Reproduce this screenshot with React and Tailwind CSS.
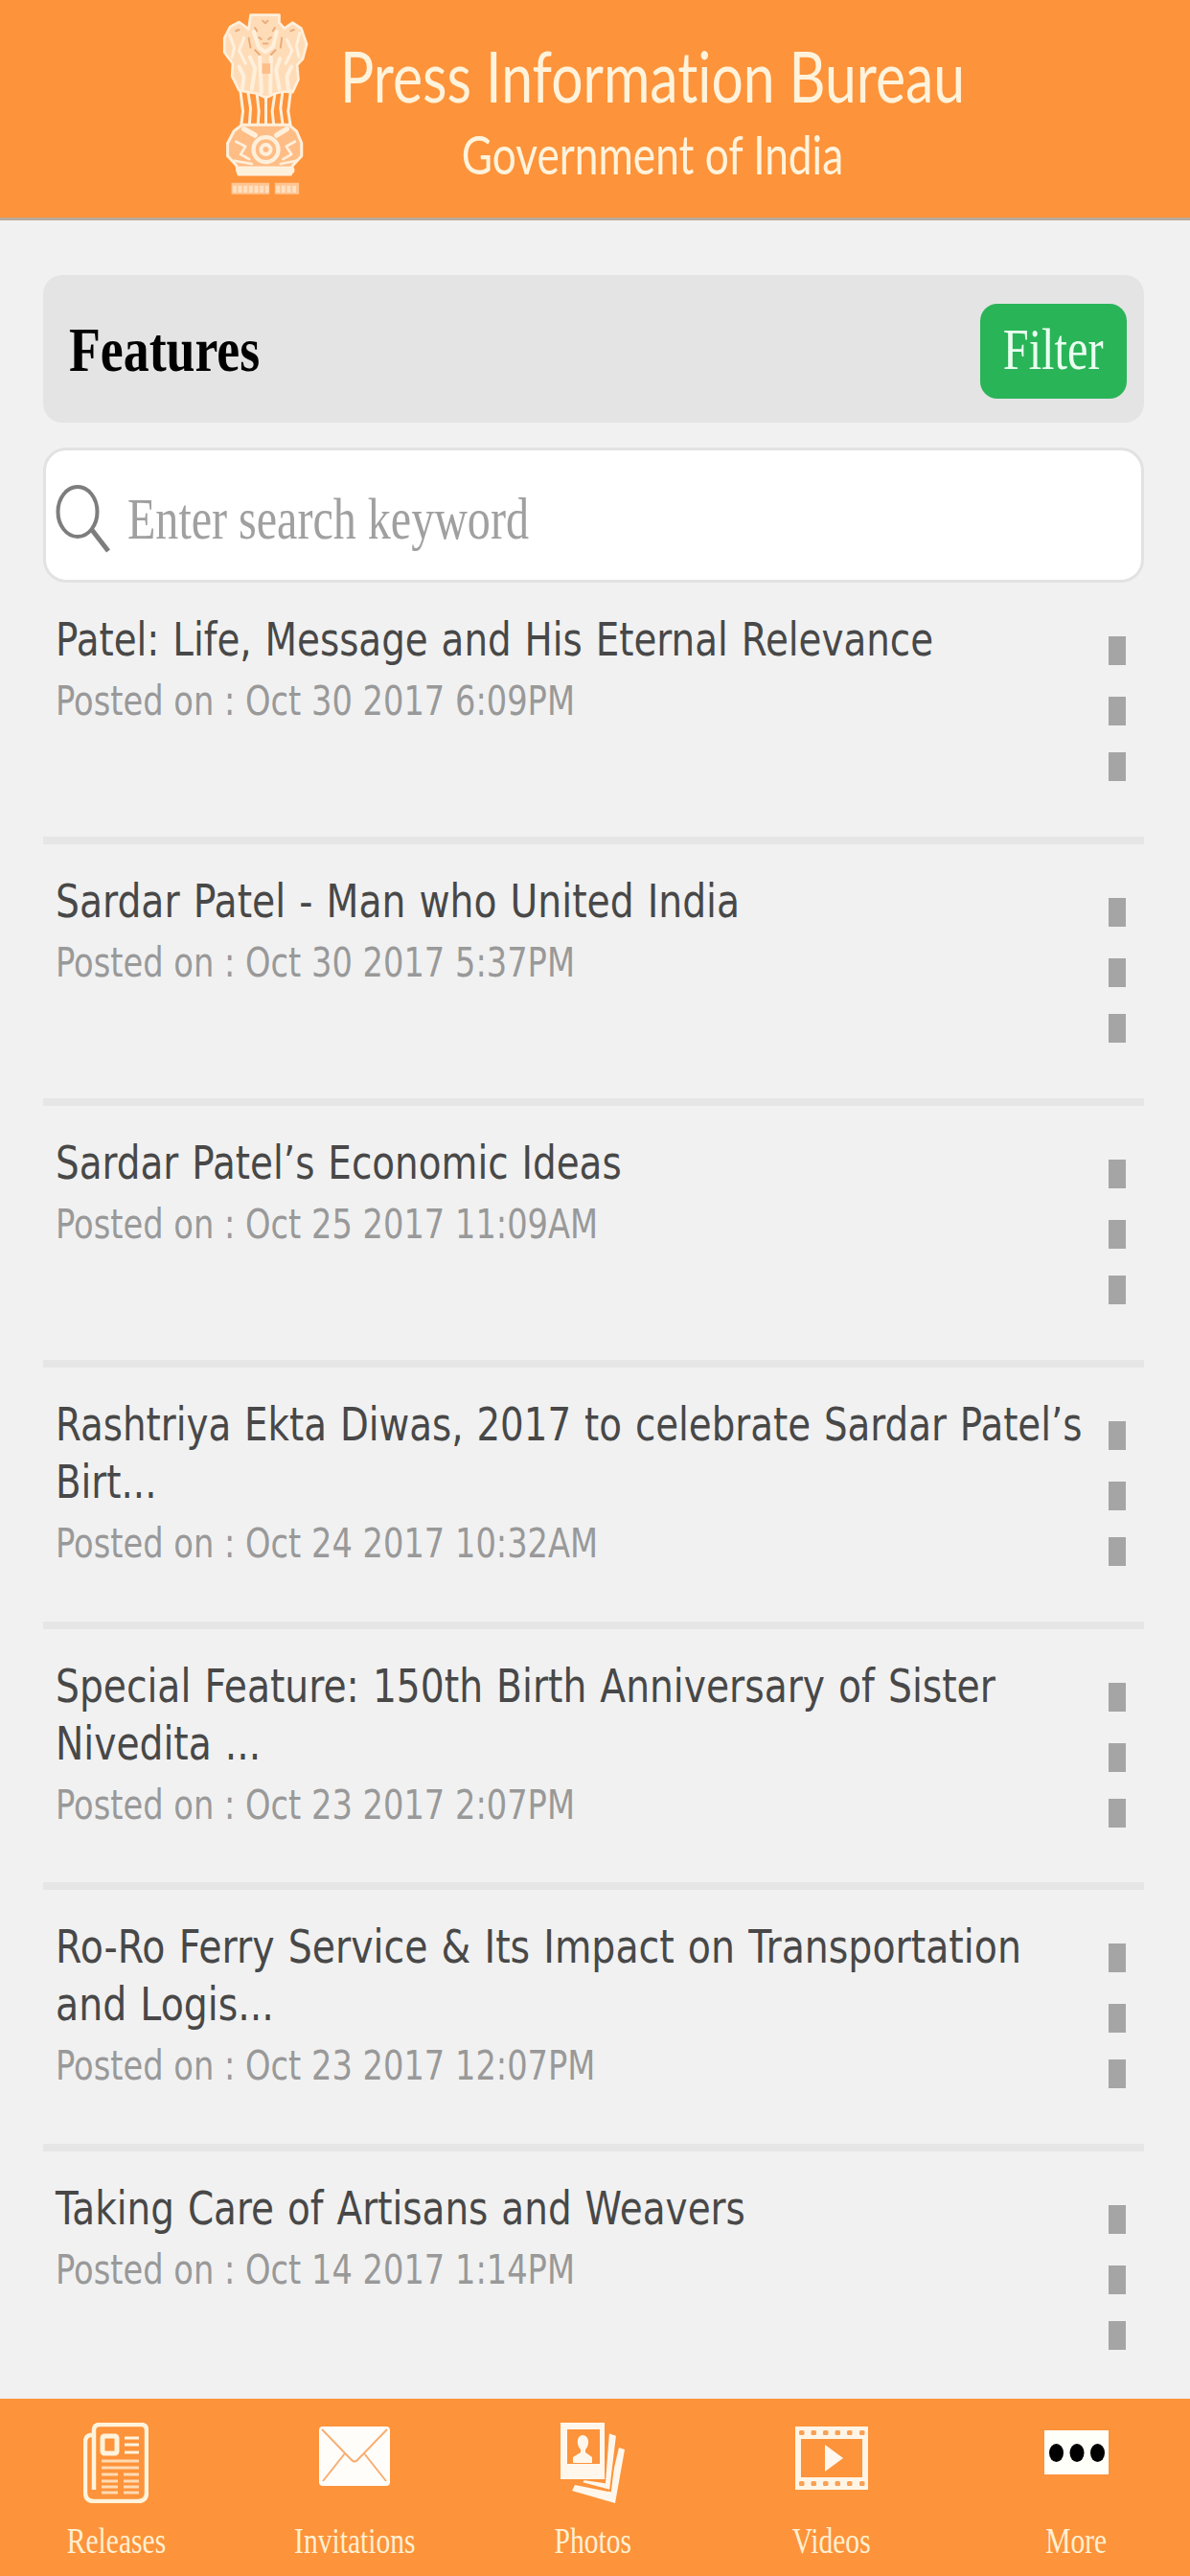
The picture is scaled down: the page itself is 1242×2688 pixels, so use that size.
const articles = [
  { title: 'Patel: Life, Message and His Eternal Relevance', date: 'Oct 30 2017 6:09PM', fit: 'scale-x-[0.8085]' },
  { title: 'Sardar Patel - Man who United India', date: 'Oct 30 2017 5:37PM', fit: 'scale-x-[0.818]' },
  { title: 'Sardar Patel’s Economic Ideas', date: 'Oct 25 2017 11:09AM', fit: 'scale-x-[0.81]' },
  { title: 'Rashtriya Ekta Diwas, 2017 to celebrate Sardar Patel’s\nBirt...', date: 'Oct 24 2017 10:32AM', fit: 'scale-x-[0.8075]' },
  { title: 'Special Feature: 150th Birth Anniversary of Sister\nNivedita ...', date: 'Oct 23 2017 2:07PM', fit: 'scale-x-[0.817]' },
  { title: 'Ro-Ro Ferry Service & Its Impact on Transportation\nand Logis...', date: 'Oct 23 2017 12:07PM', fit: 'scale-x-[0.8215]' },
  { title: 'Taking Care of Artisans and Weavers', date: 'Oct 14 2017 1:14PM', fit: 'scale-x-[0.811]' },
];

const Emblem = () => (
  <svg viewBox="95 40 275 580" className="h-[193px] w-[92px]" fill="none" stroke="#fff0dc" strokeWidth="8" strokeLinecap="round" strokeLinejoin="round">
    {/* lions */}
    <path d="M186 48H276V72L292 90L318 72L345 90L362 140L350 185L332 205L336 250L318 290L290 288L262 294L234 308L206 294L178 290L150 284L128 240L130 200L104 165V120L122 85L150 70L180 92Z" fill="#ffdcb8" />
    <path d="M196 100L212 150L232 164L256 148L268 100M150 210L165 240L160 280M184 180L200 215L190 280M215 180L220 290M250 180L248 290M278 185L266 220L276 280M314 210L300 240L304 280" strokeWidth="12" />
    <path d="M120 110L135 150L128 180M165 120L150 160L170 200M340 105L330 145L338 180M300 125L316 160L296 200" strokeWidth="9" />
    <path d="M224 66L232 74L240 66M200 88L206 98M262 88L256 98M212 118L220 124M250 118L242 124M226 138H240M140 98L150 94M312 98L322 94M180 120L186 150M284 120L280 150M200 158L214 172M264 158L250 172" stroke="#e9ad7c" strokeWidth="6" />
    <path d="M222 200H248V232H222Z" fill="#ffbd88" stroke="none" />
    {/* legs */}
    <path d="M154 285L162 350L156 400M178 290L186 340L182 400M206 296L212 350L208 405M234 305V400M262 296L254 350L260 405M286 290L280 340L288 400M312 285L304 350L312 400" strokeWidth="9" />
    {/* abacus */}
    <path d="M160 392L306 392L330 412L346 450V490L318 520L312 548H148L142 520L114 490V450L134 412Z" fill="#ffbd86" strokeWidth="9" />
    <path d="M165 405L200 425M300 405L268 425" strokeWidth="16" />
    <path d="M152 534H312" strokeWidth="24" />
    <circle cx="234" cy="470" r="39" strokeWidth="13" />
    <circle cx="234" cy="470" r="15" strokeWidth="12" />
    <path d="M140 445L170 460L155 485L182 500M325 445L298 460L314 485L288 500M135 505L190 515M330 505L280 515" />
    {/* motto strip */}
    <path d="M126 592H245M262 592H338" stroke="#ffc592" strokeWidth="36" strokeLinecap="butt" />
    <path d="M130 594H243M266 594H334" stroke="#ffe0c0" strokeWidth="22" strokeDasharray="12 5" strokeLinecap="butt" />
  </svg>
);

const ReleasesIcon = () => (
  <svg viewBox="0 0 68 84" className="h-[84px] w-[68px]" fill="none" stroke="#fff3dc">
    <path d="M12 13H7Q2 14 2 20V73Q2 82 11 82H57Q66 82 66 73V8Q66 2 60 2H17Q11 2 11 8V70" strokeWidth="4.5" />
    <rect x="20" y="14" width="15" height="18" rx="2" strokeWidth="5" />
    <path d="M43 16H58M43 23H58M43 31H58" strokeWidth="3" />
    <path d="M19 40H58M19 47H58M19 54H36M42 54H58M19 61H36M42 61H58M19 67H36M42 67H58M19 73H36M42 73H58" strokeWidth="3" opacity=".75" />
  </svg>
);

const InvitationsIcon = () => (
  <svg viewBox="0 0 74 62" className="h-[62px] w-[74px]" fill="none" stroke="#f7ae72" strokeWidth="2">
    <rect width="74" height="62" rx="4" fill="#fffdfa" stroke="none" />
    <path d="M3 3L34 35Q37 38 40 35L71 3M4 57L27 28M70 57L47 28" />
  </svg>
);

const PhotosIcon = () => (
  <svg viewBox="0 0 68 85" className="h-[85px] w-[68px]" fill="#fff7ec">
    <path d="M61 27L67 29L57 85L12 72L15 66L50 73Z" />
    <path d="M50 11L59 14L52 72L22 64L24 60L46 63Z" stroke="#fd933a" strokeWidth="2" />
    <path fillRule="evenodd" d="M0 1H46V60H0ZM7 8V44H41V8Z" />
    <path d="M23 14C30 14 31 24 26 29V32L33 37V43H13V37L21 32V29C16 24 17 14 23 14Z" />
  </svg>
);

const holes = [4, 16.5, 29, 41.5, 54, 67];

const VideosIcon = () => (
  <svg viewBox="0 0 76 66" className="h-[66px] w-[76px]">
    <path fill="#fff5e6" fillRule="evenodd" d="M0 0H76V66H0ZM6 13V53H70V13Z" />
    {holes.map((x) => (
      <g key={x} fill="#f9a055">
        <rect x={x} y="4" width="5.5" height="5" rx="1.5" />
        <rect x={x} y="57" width="5.5" height="5" rx="1.5" />
      </g>
    ))}
    <path d="M31 19L50 33L31 47Z" fill="#fff8f0" />
  </svg>
);

const MoreIcon = () => (
  <svg viewBox="0 0 67 46" className="h-[46px] w-[67px]">
    <rect width="67" height="46" fill="#fffffa" />
    <ellipse cx="12.5" cy="23.5" rx="7.5" ry="9.5" />
    <ellipse cx="34" cy="23.5" rx="7.5" ry="9.5" />
    <ellipse cx="55.5" cy="23.5" rx="7.5" ry="9.5" />
  </svg>
);

const tabs = [
  { label: 'Releases', icon: ReleasesIcon, offset: 'pt-[25px]' },
  { label: 'Invitations', icon: InvitationsIcon, offset: 'pt-[29px]' },
  { label: 'Photos', icon: PhotosIcon, offset: 'pt-[24px]' },
  { label: 'Videos', icon: VideosIcon, offset: 'pt-[29px]' },
  { label: 'More', icon: MoreIcon, offset: 'pt-[33px] pl-2' },
];

const ArticleRow = ({ title, date, fit }) => (
  <li className="flex h-[272.9px] shrink-0 justify-between border-b-8 border-[#e6e6e6] pt-[29px] pr-[19px] pl-[13px]">
    <div className="w-[1070px] whitespace-pre font-['DejaVu_Sans',sans-serif]">
      <h2 className={`origin-left text-[48px] leading-[60px] text-[#484848] [word-spacing:2px] ${fit}`}>{title}</h2>
      <p className="origin-left scale-x-[0.802] text-[42px] leading-[69px] text-[#999999]">Posted on : {date}</p>
    </div>
    <button className="flex w-[18px] flex-col pt-[27px]">
      <span className="h-[30px] w-[18px] bg-[#a5a5a5]" />
      <span className="mt-[33px] h-[30px] w-[18px] bg-[#a5a5a5]" />
      <span className="mt-[28px] h-[30px] w-[18px] bg-[#a5a5a5]" />
    </button>
  </li>
);

export default function App() {
  return (
    <div className="flex h-[2688px] w-[1242px] flex-col overflow-hidden bg-[#f1f1f1] font-['Liberation_Serif',serif]">
      <header className="flex h-[230px] shrink-0 border-b-3 border-[#b9aa9a] bg-[#fd933a] pt-[13px] pl-[231px] font-[Lato,sans-serif] text-[#fff3dc] [font-variant-ligatures:none]">
        <Emblem />
        <div className="flex w-[716px] flex-col items-center whitespace-nowrap">
          <h1 className="mt-[21px] scale-x-[0.795] text-[74px] leading-[90px]">Press Information Bureau</h1>
          <p className="scale-x-[0.775] text-[57px] leading-[72px]">Government of India</p>
        </div>
      </header>

      <main className="flex min-h-0 flex-1 flex-col overflow-hidden pt-[57px] pr-[48px] pl-[45px]">
        <div className="flex h-[154px] shrink-0 items-center justify-between rounded-[20px] bg-[#e4e4e4] pr-[18px] pl-[27px]">
          <h2 className="origin-left scale-x-[0.815] text-[66px] font-bold text-black">Features</h2>
          <button className="mt-1 flex h-[99px] w-[153px] items-center justify-center rounded-[18px] bg-[#29b458] pb-[3px] text-[62px] text-[#eafff0]">
            <span className="scale-x-[0.78]">Filter</span>
          </button>
        </div>

        <div className="mt-[26px] flex h-[141px] shrink-0 items-center rounded-[24px] border-3 border-[#e2e2e2] bg-white pt-[7px] pl-[10px]">
          <svg viewBox="0 0 60 74" className="h-[74px] w-[60px]" fill="none" stroke="#7d7d7d" strokeWidth="4">
            <ellipse cx="23" cy="30" rx="20.5" ry="26" />
            <path d="M38 49L55 71" strokeWidth="5" />
          </svg>
          <span className="ml-[15px] origin-left scale-x-[0.775] whitespace-nowrap text-[62px] text-[#a0a0a0]">Enter search keyword</span>
        </div>

        <ul className="flex flex-col">
          {articles.map((article) => (
            <ArticleRow key={article.title} {...article} />
          ))}
        </ul>
      </main>

      <nav className="grid h-[185px] shrink-0 grid-cols-[242px_256px_242px_256px_246px] bg-[#fd933a] text-[38px] text-[#fff0d2]">
        {tabs.map(({ label, icon: Icon, offset }) => (
          <a key={label} className={`flex flex-col items-center ${offset}`}>
            <Icon />
            <span className="mt-auto mb-[15px] scale-x-[0.777] leading-[44px]">{label}</span>
          </a>
        ))}
      </nav>
    </div>
  );
}
